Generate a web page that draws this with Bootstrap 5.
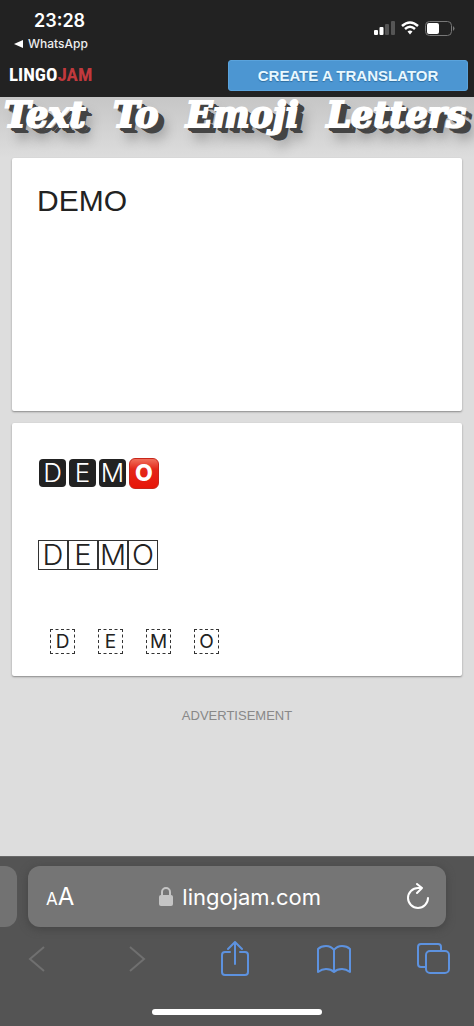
<!DOCTYPE html>
<html lang="en">
<head>
<meta charset="utf-8">
<meta name="viewport" content="width=device-width, initial-scale=1">
<title>Text To Emoji Letters</title>
<link href="https://cdn.jsdelivr.net/npm/bootstrap@5.3.0/dist/css/bootstrap.min.css" rel="stylesheet">
<style>
  body { font-family: "Liberation Sans", Arial, sans-serif; background: #ddd; color: #222; }
  .ui-font { font-family: Inter, Roboto, sans-serif; }
  .top-bar { background: #222; color: #fff; }
  .status-row { height: 56px; padding: 10px 19px 0 14px; }
  .clock { font-size: 18px; font-weight: 600; line-height: 22px; padding-left: 20px; }
  .back-app { font-size: 12px; font-weight: 500; line-height: 24px; color: #eee; gap: 5px; }
  .status-icons { gap: 6px; padding-top: 11px; }
  .site-nav { height: 41px; padding: 0 6px 3px 9px; }
  .logo { font-family: "Liberation Sans Narrow", "Roboto Condensed", sans-serif; font-size: 19px; font-weight: 700; line-height: 30px; color: #fff; }
  .logo span { color: #c1393d; }
  .create-btn { width: 240px; height: 31px; font-size: 15px; font-weight: 700; line-height: 29px; padding: 0; color: #e8f8ff; background: #4c96d2; border: 1px solid #5aa3dc; border-radius: 3px; text-shadow: 0 1px 1px #2f6d9f; }
  .create-btn:hover { color: #fff; background: #3d86c2; }
  .page-title { height: 61px; padding: 0 8px 0 4px; font-family: "DejaVu Serif", serif; font-style: italic; font-size: 35px; font-weight: 700; line-height: 36px; color: #fff; -webkit-text-stroke: 2px #fff; text-shadow: 1px 1px 0 #ccc, 3px 3px 0 #444, 4px 4px 0 #444, 6px 5px 0 #444, 7px 6px 0 #444, 8px 12px 12px #888; background: linear-gradient(#c6c6c6, #ddd); }
  .panel { height: 253px; border-radius: 2px; background: #fff; box-shadow: 0 1px 2px #888; }
  .source { resize: none; border: 0; font-size: 30px; line-height: 36px; padding: 25px; color: #222; }
  .result { padding: 34px 26px 0; }
  .glyph { display: grid; place-items: center; font-family: Inter, sans-serif; font-weight: 300; }
  .solid-row { gap: 3px; height: 32px; padding-left: 1px; }
  .solid { width: 27px; height: 28px; border-radius: 4px; background: #222; color: #fff; font-size: 26px; line-height: 28px; }
  .blood { width: 30px; height: 31px; border-radius: 6px; border: 1px solid #c8261a; background: linear-gradient(#f0705c, #e3281a 35%, #e81508); color: #fff; font-size: 23px; font-weight: 800; line-height: 28px; }
  .boxed-row { margin-top: 51px; }
  .boxed { width: 30px; height: 30px; border: 1px solid #333; font-size: 29px; line-height: 28px; }
  .dashed-row { gap: 23px; margin-top: 59px; padding-left: 12px; }
  .dashed { width: 25px; height: 25px; border: 1px dashed #333; font-size: 19px; font-weight: 400; line-height: 23px; }
  .ad-label { font-size: 13px; line-height: 20px; color: #888; padding-top: 30px; }
  .browser-bar { height: 170px; background: #545454; color: #fff; border-top: 1px solid #686868; }
  .address-row { height: 71px; padding: 9px 28px 0 0; gap: 11px; }
  .tab-edge { width: 17px; height: 61px; border-radius: 0 12px 12px 0; background: #727272; }
  .address { height: 61px; padding: 0 16px 0 18px; border-radius: 12px; background: #757575; box-shadow: 0 2px 8px #444; }
  .address button, .tools button { background: none; border: 0; padding: 0; color: inherit; }
  .small-a { font-size: 17px; }
  .big-a { font-size: 24px; }
  .host { font-size: 22px; line-height: 30px; gap: 9px; color: #fff; }
  .tools { height: 62px; padding: 0 24px 0 20px; color: #5d92df; }
  .tools button { width: 34px; height: 40px; }
  .tools button:disabled { color: #707070; }
  .home-line { width: 170px; height: 6px; border-radius: 3px; background: #fff; margin-top: 19px; }
  svg { display: block; fill: none; stroke: currentColor; }
</style>
</head>
<body>
<div class="d-flex flex-column min-vh-100">
  <header class="top-bar">
    <div class="status-row ui-font d-flex justify-content-between">
      <div>
        <div class="clock">23:28</div>
        <a href="#" class="back-app d-flex align-items-center text-decoration-none">
          <svg width="9" height="8" viewBox="0 0 9 8"><path d="M0 4 9 0V8Z" fill="#fff" stroke="none"/></svg>WhatsApp
        </a>
      </div>
      <div class="status-icons d-flex align-items-start">
        <svg width="21" height="14" viewBox="0 0 21 14"><g stroke="none"><rect x="0" y="9" width="4" height="5" rx="1" fill="#fff"/><rect x="5.500" y="6" width="4" height="8" rx="1" fill="#fff"/><rect x="11" y="3" width="4" height="11" rx="1" fill="#555"/><rect x="17" y="0" width="4" height="14" rx="1" fill="#555"/></g></svg>
        <svg width="18" height="14" viewBox="0 0 18 14"><path d="M1 5Q9-2 17 5M4 8Q9 3.500 14 8" stroke="#fff" stroke-width="2.500"/><path d="M6.500 10.500Q9 8.500 11.500 10.500L9 13.500Z" fill="#fff" stroke="none"/></svg>
        <svg width="30" height="15" viewBox="0 0 30 15"><rect x=".5" y=".5" width="26" height="14" rx="4" stroke="#777"/><rect x="2" y="2" width="12" height="11" rx="2" fill="#fff" stroke="none"/><path d="M28 5Q31 7.500 28 10Z" fill="#777" stroke="none"/></svg>
      </div>
    </div>
    <nav class="site-nav d-flex align-items-center justify-content-between">
      <a href="#" class="logo text-decoration-none">LINGO<span>JAM</span></a>
      <button type="button" class="btn create-btn">CREATE A TRANSLATOR</button>
    </nav>
  </header>

  <main class="flex-grow-1">
    <h1 class="page-title d-flex justify-content-between m-0"><span>Text</span> <span>To</span> <span>Emoji</span> <span>Letters</span></h1>
    <div class="d-flex flex-column gap-2 mx-auto px-2">
      <div class="px-1 pb-1">
        <label for="source" class="visually-hidden">Text</label>
        <textarea id="source" class="panel source d-block w-100">DEMO</textarea>
      </div>
      <div class="px-1">
        <div class="panel result">
          <div class="solid-row d-flex align-items-center"><span class="glyph solid">D</span><span class="glyph solid">E</span><span class="glyph solid">M</span><span class="glyph blood">O</span></div>
          <div class="boxed-row d-flex"><span class="glyph boxed">D</span><span class="glyph boxed">E</span><span class="glyph boxed">M</span><span class="glyph boxed">O</span></div>
          <div class="dashed-row d-flex"><span class="glyph dashed">D</span><span class="glyph dashed">E</span><span class="glyph dashed">M</span><span class="glyph dashed">O</span></div>
        </div>
      </div>
    </div>
    <div class="ad-label text-center">ADVERTISEMENT</div>
  </main>

  <footer class="browser-bar ui-font">
    <div class="address-row d-flex">
      <div class="tab-edge"></div>
      <div class="address flex-grow-1 d-flex align-items-center justify-content-between">
        <button type="button" aria-label="Text size"><span class="small-a">A</span><span class="big-a">A</span></button>
        <div class="host d-flex align-items-center">
          <svg width="14" height="20" viewBox="0 0 14 20"><rect x="0" y="8" width="14" height="11" rx="2" fill="#c4c4c4" stroke="none"/><path d="M3 9V5a4 4 0 0 1 8 0V9" stroke="#c4c4c4" stroke-width="2"/></svg>lingojam.com
        </div>
        <button type="button" aria-label="Reload"><svg width="24" height="28" viewBox="0 0 24 28" stroke-width="2" stroke-linecap="round" stroke-linejoin="round"><path d="M22 15a10 10 0 1 1-10-10H16M11 1l5 4-5 5"/></svg></button>
      </div>
    </div>
    <div class="tools d-flex align-items-center justify-content-between">
      <button type="button" disabled aria-label="Back"><svg width="34" height="36" viewBox="0 0 34 36" stroke-width="2"><path d="M24 6 10 18 24 30"/></svg></button>
      <button type="button" disabled aria-label="Forward"><svg width="34" height="36" viewBox="0 0 34 36" stroke-width="2"><path d="M11 6 25 18 11 30"/></svg></button>
      <button type="button" aria-label="Share"><svg width="34" height="36" viewBox="0 0 34 36" stroke-width="2" stroke-linecap="round" stroke-linejoin="round"><path d="M12 11H7a3 3 0 0 0-3 3V31a3 3 0 0 0 3 3H27a3 3 0 0 0 3-3V14a3 3 0 0 0-3-3H22M17 23V1M10 8l7-7L24 8"/></svg></button>
      <button type="button" aria-label="Bookmarks"><svg width="34" height="36" viewBox="0 0 34 36" stroke-width="2" stroke-linejoin="round"><path d="M17 9Q14 5 9 5 4 5 1 8V31Q5 28 9 28 14 28 17 31 20 28 25 28 29 28 33 31V8Q30 5 25 5 20 5 17 9V31"/></svg></button>
      <button type="button" aria-label="Tabs"><svg width="34" height="36" viewBox="0 0 34 36" stroke-width="2"><rect x="10" y="10" width="23" height="22" rx="4"/><path d="M10 26H5a3 3 0 0 1-3-3V6a3 3 0 0 1 3-3H22a3 3 0 0 1 3 3V10"/></svg></button>
    </div>
    <div class="home-line mx-auto"></div>
  </footer>
</div>
<script src="https://cdn.jsdelivr.net/npm/bootstrap@5.3.0/dist/js/bootstrap.bundle.min.js"></script>
</body>
</html>
